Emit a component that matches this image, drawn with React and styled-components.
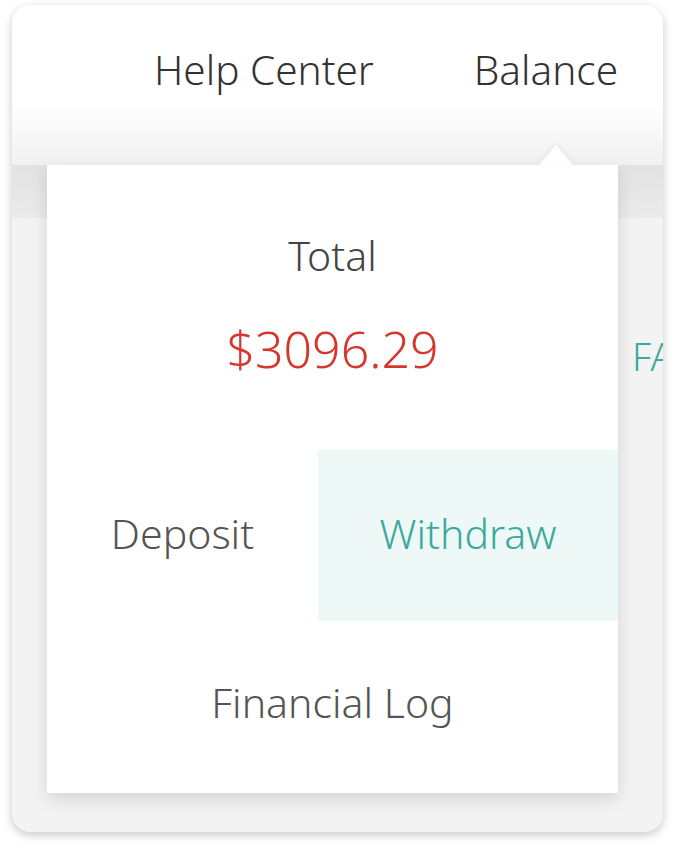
import React from "react";
import styled, { createGlobalStyle } from "styled-components";

// ===== 잔액 드롭다운 =====

const GlobalStyle = createGlobalStyle`
  html, body {
    margin: 0;
    padding: 0;
    background: #ffffff;
  }
  body {
    font-family: "Noto Sans", "Noto Sans CJK KR", sans-serif;
    font-weight: 300;
  }
`;

function App() {
    return (
        <Page>
            <GlobalStyle />
            <Card>
                <Header>
                    <NavItem>Help Center</NavItem>
                    <NavItem>Balance</NavItem>
                </Header>
                <SubBar />
                <Content>
                    <ContentLink>FAQ</ContentLink>
                </Content>
                <Dropdown>
                    <Caret />
                    <TotalLabel>Total</TotalLabel>
                    <Amount>$3096.29</Amount>
                    <ActionRow>
                        <ActionCell>Deposit</ActionCell>
                        <ActionCell active>Withdraw</ActionCell>
                    </ActionRow>
                    <LogLink>Financial Log</LogLink>
                </Dropdown>
            </Card>
        </Page>
    );
}

export default App;

const Page = styled.div`
  width: 675px;
  height: 849px;
  padding: 5px 12px 0 12px;
  box-sizing: border-box;
`;
const Card = styled.div`
  position: relative;
  width: 651px;
  height: 827px;
  border-radius: 18px;
  overflow: hidden;
  background: #f3f3f3;
  box-shadow: 0 3px 10px rgba(0, 0, 0, 0.22);
  display: flex;
  flex-direction: column;
`;
const Header = styled.div`
  height: 160px;
  flex-shrink: 0;
  display: flex;
  justify-content: flex-end;
  align-items: flex-start;
  gap: 100px;
  padding: 38px 45px 0 0;
  box-sizing: border-box;
  background: linear-gradient(to bottom, #ffffff 0%, #ffffff 62%, #f1f1f1 100%);
`;
const NavItem = styled.div`
  font-size: 40.5px;
  line-height: 54px;
  color: #333333;
  white-space: nowrap;
`;
const SubBar = styled.div`
  height: 53px;
  flex-shrink: 0;
  background: linear-gradient(to bottom, #e2e2e2, #ebebeb);
`;
const Content = styled.div`
  flex: 1;
  display: flex;
  padding: 118px 0 0 620px;
  box-sizing: border-box;
`;
const ContentLink = styled.div`
  font-size: 38px;
  line-height: 40px;
  color: #3aa99e;
  white-space: nowrap;
`;
const Dropdown = styled.div`
  position: absolute;
  left: 35px;
  top: 160px;
  width: 571px;
  height: 628px;
  background: #ffffff;
  box-shadow: 0 6px 16px rgba(0, 0, 0, 0.13);
  display: flex;
  flex-direction: column;
  align-items: stretch;
`;
const Caret = styled.div`
  position: absolute;
  top: -20px;
  left: 492px;
  width: 0;
  height: 0;
  border-left: 17px solid transparent;
  border-right: 17px solid transparent;
  border-bottom: 20px solid #ffffff;
  filter: drop-shadow(0 -2px 3px rgba(0, 0, 0, 0.06));
`;
const TotalLabel = styled.div`
  margin-top: 64px;
  text-align: center;
  font-size: 41px;
  line-height: 52px;
  color: #444444;
`;
const Amount = styled.div`
  margin-top: 38px;
  text-align: center;
  font-size: 50px;
  line-height: 60px;
  color: #d6362c;
`;
const ActionRow = styled.div`
  margin-top: 71px;
  display: grid;
  grid-template-columns: 271px 1fr;
  height: 171px;
`;
const ActionCell = styled.div`
  display: flex;
  align-items: center;
  justify-content: center;
  padding-bottom: 6px;
  box-sizing: border-box;
  font-size: 41px;
  color: ${(props) => (props.active ? "#3aa99e" : "#555555")};
  background: ${(props) => (props.active ? "#eef8f7" : "transparent")};
`;
const LogLink = styled.div`
  margin-top: 55px;
  text-align: center;
  font-size: 41px;
  line-height: 52px;
  color: #555555;
`;
